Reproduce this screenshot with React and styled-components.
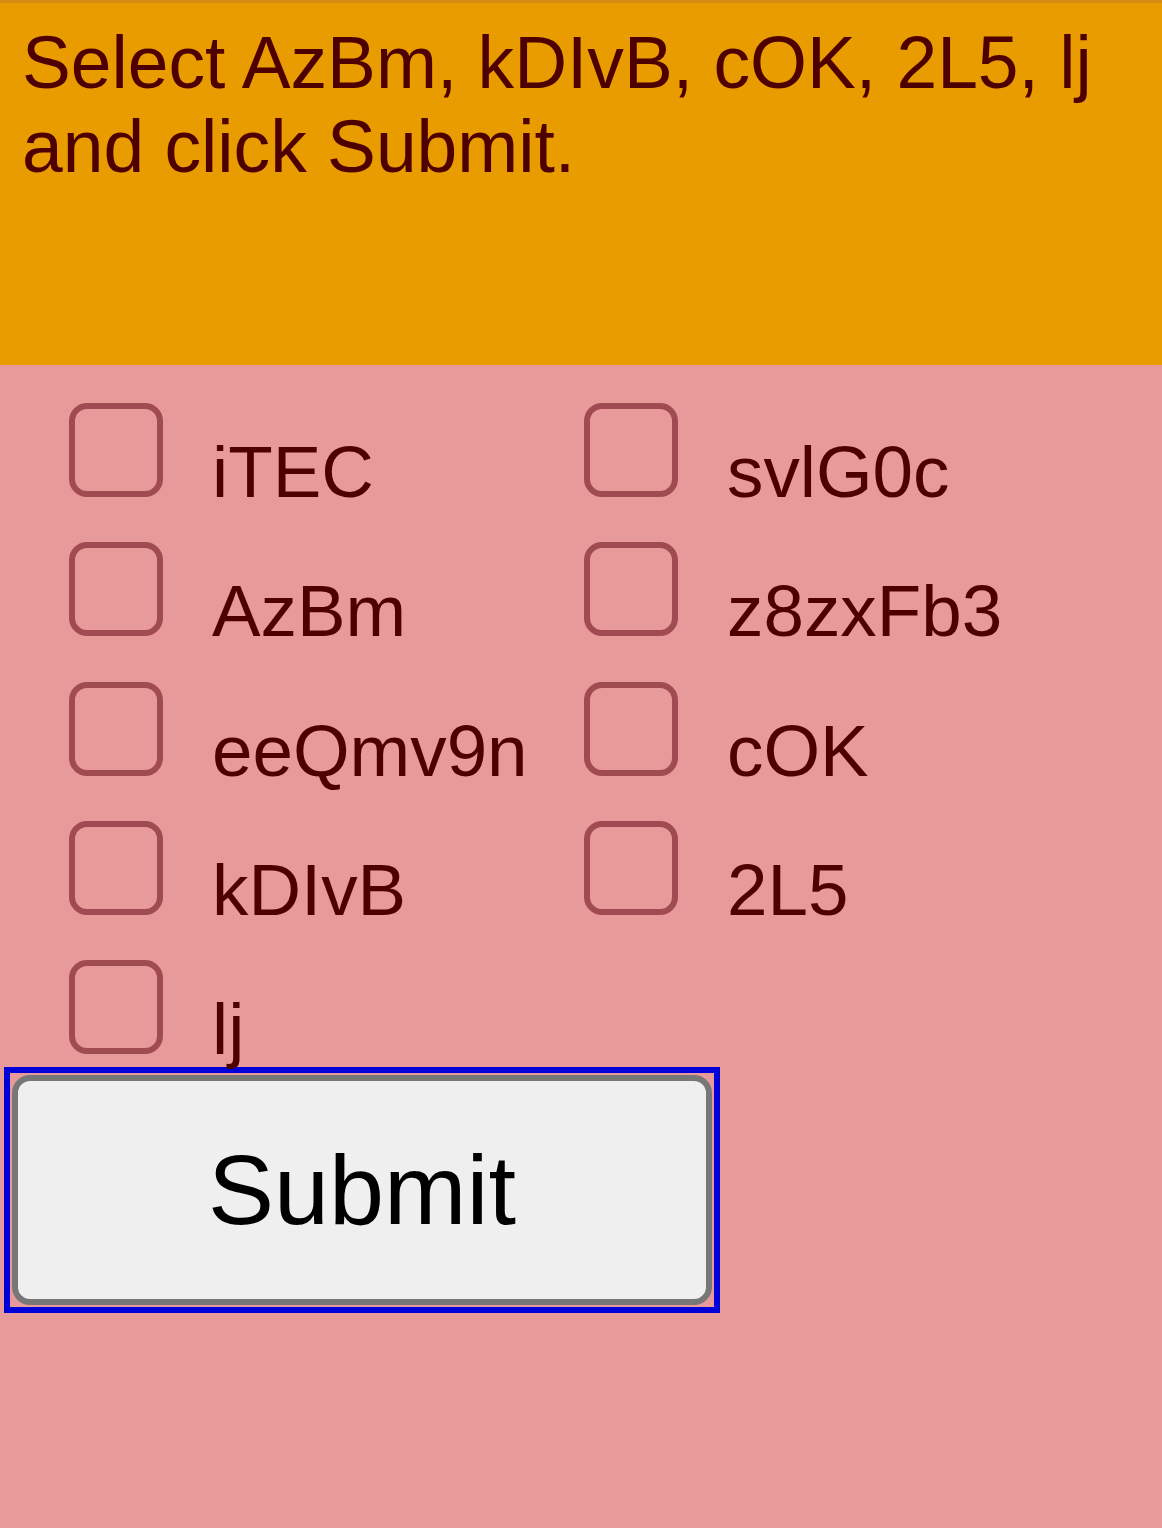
import styled, { createGlobalStyle } from "styled-components";

const GlobalStyle = createGlobalStyle`
  html, body {
    margin: 0;
    padding: 0;
    background: #e89a9a;
  }
  body {
    font-family: "Liberation Sans", Arial, sans-serif;
  }
`;

const Page = styled.div`
  width: 1162px;
  min-height: 1528px;
  background: #e89a9a;
  overflow: hidden;
`;

const Header = styled.div`
  box-sizing: border-box;
  height: 365px;
  padding: 18px 40px 0 22px;
  background: #e99c00;
  border-top: 3px solid #d98a12;
  color: #4e0000;
  font-size: 73.2px;
  line-height: 84px;
`;

const Form = styled.div`
  padding-top: 38px;
`;

const Grid = styled.div`
  display: grid;
  grid-template-columns: 515px 515px;
  grid-auto-rows: 110px;
  row-gap: 29.25px;
  padding-left: 69px;
`;

const Item = styled.label`
  display: flex;
  align-items: baseline;
  gap: 49px;
  color: #4e0000;
  font-size: 72.8px;
  white-space: nowrap;
`;

const Box = styled.span`
  box-sizing: border-box;
  display: block;
  flex: none;
  width: 94px;
  height: 94px;
  border: 6.5px solid #a04a52;
  border-radius: 18px;
`;

const FocusRing = styled.div`
  box-sizing: border-box;
  width: 716px;
  margin: -3px 0 0 4px;
  padding: 2px;
  border: 6px solid #0000d8;
`;

const SubmitButton = styled.button`
  display: block;
  box-sizing: border-box;
  width: 100%;
  height: 230px;
  border: 6px solid #777;
  border-radius: 18px;
  background: #efefef;
  color: #000;
  font-family: "Liberation Sans", Arial, sans-serif;
  font-size: 99px;
  outline: none;
  padding: 0;
  cursor: pointer;
`;

const options = [
  "iTEC",
  "svlG0c",
  "AzBm",
  "z8zxFb3",
  "eeQmv9n",
  "cOK",
  "kDIvB",
  "2L5",
  "lj",
];

export default function App() {
  return (
    <Page>
      <GlobalStyle />
      <Header>Select AzBm, kDIvB, cOK, 2L5, lj and click Submit.</Header>
      <Form>
        <Grid>
          {options.map((name) => (
            <Item key={name}>
              <Box />
              <span>{name}</span>
            </Item>
          ))}
        </Grid>
        <FocusRing>
          <SubmitButton>Submit</SubmitButton>
        </FocusRing>
      </Form>
    </Page>
  );
}
